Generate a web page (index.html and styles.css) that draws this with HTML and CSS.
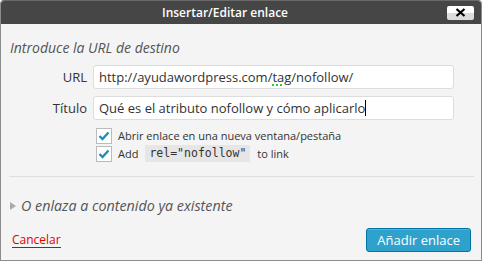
FILE: index.html
```html
<!DOCTYPE html>
<html lang="es">
<head>
    <meta charset="UTF-8">
    <title>Insertar/Editar enlace</title>
    <link rel="stylesheet" href="styles.css">
</head>
<body>
    <div class="dialog">
        <div class="titlebar">
            <div class="title">Insertar/Editar enlace</div>
            <button class="close" type="button">
                <svg width="11" height="9" viewBox="0 0 11 9"><path d="M1.5 1 L9.5 8 M9.5 1 L1.5 8" stroke="#000" stroke-width="2.2"/></svg>
            </button>
        </div>

        <div class="content">
            <p class="intro">Introduce la URL de destino</p>

            <div class="fields">
                <label for="url">URL</label>
                <div class="field">http://ayudawordpress.com/<span class="spell">tag</span>/nofollow/</div>
                <label for="title">Título</label>
                <div class="field">Qué es el atributo nofollow y cómo aplicarlo<span class="caret"></span></div>
            </div>

            <div class="checks">
                <div class="check-row">
                    <span class="box"><svg width="12" height="10" viewBox="0 0 12 10"><path d="M1.5 5 L4.5 8 L10.5 1.5" fill="none" stroke="#1e8cbe" stroke-width="2.4"/></svg></span>
                    Abrir enlace en una nueva ventana/pestaña
                </div>
                <div class="check-row">
                    <span class="box"><svg width="12" height="10" viewBox="0 0 12 10"><path d="M1.5 5 L4.5 8 L10.5 1.5" fill="none" stroke="#1e8cbe" stroke-width="2.4"/></svg></span>
                    Add <code>rel="nofollow"</code> to link
                </div>
            </div>

            <div class="existing">
                <span class="arrow"></span>
                O enlaza a contenido ya existente
            </div>

            <div class="actions">
                <a href="#" class="cancel">Cancelar</a>
                <button type="button" class="primary">Añadir enlace</button>
            </div>
        </div>
    </div>
</body>
</html>
```

FILE: styles.css
```css
* {
    box-sizing: border-box;
    margin: 0;
    padding: 0;
}

body {
    font-family: 'Open Sans', sans-serif;
    background-color: #fff;
}

.dialog {
    width: 482px;
    height: 261px;
    background-color: #f4f4f4;
    border: 1px solid #8c8c8c;
    border-top-color: #6a6a6a;
    border-radius: 4px 4px 0 0;
    overflow: hidden;
    display: flex;
    flex-direction: column;
}

.titlebar {
    height: 23px;
    background-color: #464646;
    display: flex;
    align-items: center;
}

.title {
    flex: 1;
    text-align: center;
    color: #fff;
    font-size: 12px;
    font-weight: 600;
    padding-left: 2px;
}

.close {
    width: 27px;
    height: 14px;
    margin-right: 7px;
    border: none;
    border-radius: 2px;
    background: linear-gradient(#fff 50%, #dcdcdc 50%);
    display: flex;
    align-items: center;
    justify-content: center;
}

.content {
    flex: 1;
    padding: 0 7px 0 9px;
    display: flex;
    flex-direction: column;
}

.intro {
    font-style: italic;
    font-size: 14px;
    color: #555;
    margin-top: 14px;
    line-height: 20px;
}

.fields {
    display: grid;
    grid-template-columns: 77px 361px;
    column-gap: 6px;
    row-gap: 7px;
    align-items: center;
    margin-top: 7px;
}

.fields label {
    text-align: right;
    font-size: 13px;
    color: #333;
}

.field {
    height: 24px;
    background-color: #fff;
    border: 1px solid #ddd;
    border-radius: 3px;
    padding: 0 5px;
    font-size: 13px;
    line-height: 22px;
    color: #333;
    white-space: nowrap;
}

.spell {
    text-decoration: underline dotted #3c3;
    text-decoration-thickness: 2px;
    text-underline-offset: 2px;
}

.caret {
    display: inline-block;
    width: 1px;
    height: 16px;
    background-color: #000;
    vertical-align: -3px;
}

.checks {
    margin-left: 86px;
    margin-top: 7px;
    display: flex;
    flex-direction: column;
    gap: 1px;
}

.check-row {
    display: flex;
    align-items: center;
    gap: 6px;
    font-size: 11px;
    color: #333;
    height: 17px;
}

.box {
    width: 16px;
    height: 16px;
    background-color: #fff;
    border: 1px solid #bbb;
    display: flex;
    align-items: center;
    justify-content: center;
}

code {
    font-family: 'DejaVu Sans Mono', monospace;
    font-size: 11.5px;
    color: #333;
    background-color: #e6e6e6;
    padding: 0 4px;
    line-height: 17px;
    margin: 0 1px;
}

.existing {
    margin-top: 14px;
    margin-left: -1px;
    padding-top: 19px;
    border-top: 1px solid #dedede;
    font-style: italic;
    font-size: 14.3px;
    color: #555;
    display: flex;
    align-items: center;
    gap: 5px;
}

.arrow {
    width: 0;
    height: 0;
    margin-left: 1px;
    border-left: 6px solid #aaa;
    border-top: 4px solid transparent;
    border-bottom: 4px solid transparent;
}

.actions {
    display: flex;
    justify-content: space-between;
    align-items: center;
    margin-top: 13px;
    padding-right: 3px;
}

.cancel {
    color: #d00;
    font-size: 12px;
    text-decoration: none;
    border-bottom: 1px solid #d00;
    margin-left: 2px;
    line-height: 15px;
}

.primary {
    height: 24px;
    padding: 0 10px;
    background-color: #2ea2cc;
    border: 1px solid #0074a2;
    border-radius: 3px;
    color: #fff;
    font-family: 'Open Sans', sans-serif;
    font-size: 13px;
    box-shadow: inset 0 1px 0 rgba(120, 200, 230, 0.5);
}
```
